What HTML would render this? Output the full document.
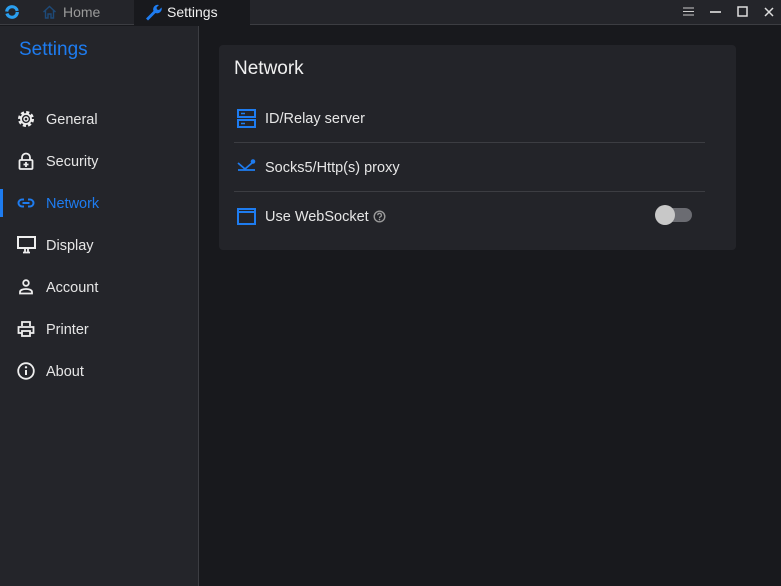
<!DOCTYPE html>
<html><head><meta charset="utf-8"><style>
*{margin:0;padding:0;box-sizing:border-box}
body{width:781px;height:586px;overflow:hidden;background:#18191d;font-family:"Liberation Sans",sans-serif;color:#e6e6e6;position:relative}
.tb{position:absolute;left:0;top:0;width:781px;height:25px;background:#24252a;border-bottom:1px solid #3c3d42}
.tab{position:absolute;top:0;height:25px;font-size:14px;line-height:25px}
.side{position:absolute;left:0;top:26px;width:199px;height:560px;background:#24252a;border-right:1px solid #3c3d42}
.side h1{position:absolute;left:19px;top:13px;font-size:19px;font-weight:normal;color:#1e7cf0}
.it{position:absolute;left:0;height:30px;width:199px;font-size:14.5px;line-height:32px}
.it span{position:absolute;left:46px}
.it svg{position:absolute;left:17px;top:6px}
.card{position:absolute;left:219px;top:45px;width:517px;height:205px;background:#232429;border-radius:4px}
.card h2{position:absolute;left:15px;top:13px;font-size:19px;font-weight:normal;color:#f0f0f0}
.row{position:absolute;left:15px;width:471px;height:48px;font-size:14.5px;line-height:50px}
.row span{position:absolute;left:31px}
.row svg{position:absolute;left:3px;top:15px}
.sep{position:absolute;left:15px;width:471px;height:1px;background:#3c3d42}
</style></head><body>
<div class="tb">
 <svg style="position:absolute;left:4px;top:4px" width="16" height="16" viewBox="0 0 16 16"><circle cx="8" cy="8" r="5.3" fill="none" stroke="#2a9ff0" stroke-width="3.2" stroke-dasharray="15 2"/></svg>
 <div class="tab" style="left:40px;width:94px;color:#9a9a9a">
  <svg style="position:absolute;left:2px;top:5px" width="15" height="14" viewBox="0 0 15 14"><path d="M1.5 7L7.5 1.5 13.5 7M3.5 5.5V13H6V9h3v4h2.5V5.5" fill="none" stroke="#1e4a78" stroke-width="1.4"/></svg>
  <span style="position:absolute;left:23px">Home</span></div>
 <div class="tab" style="left:134px;width:116px;background:#18191d;color:#f0f0f0">
  <svg style="position:absolute;left:10px;top:3px" width="18" height="18" viewBox="0 0 18 18"><path d="M2 15.5L9.5 8a4.5 4.5 0 0 1 5.5-6l-2.5 2.5.5 2 2 .5L17.5 4.5a4.5 4.5 0 0 1-6 5.5L4 17.5z" fill="#1e7cf0"/></svg>
  <span style="position:absolute;left:33px">Settings</span></div>
 <svg style="position:absolute;left:683px;top:7px" width="11" height="9"><path d="M0 1h11M0 4.5h11M0 8h11" stroke="#ccc" stroke-width="1"/></svg>
 <svg style="position:absolute;left:710px;top:11px" width="11" height="2"><path d="M0 1h11" stroke="#eee" stroke-width="1.5"/></svg>
 <svg style="position:absolute;left:737px;top:6px" width="11" height="11"><rect x="1" y="1" width="9" height="9" fill="none" stroke="#ddd" stroke-width="1.5"/></svg>
 <svg style="position:absolute;left:764px;top:7px" width="10" height="10"><path d="M1 1l8 8M9 1L1 9" stroke="#ddd" stroke-width="1.5"/></svg>
</div>
<div class="side">
 <h1>Settings</h1>
 <div class="it" style="top:78px"><svg width="18" height="18" viewBox="0 0 18 18"><circle cx="9" cy="9" r="6.5" fill="none" stroke="#eee" stroke-width="3" stroke-dasharray="3 2.1"/><circle cx="9" cy="9" r="5" fill="none" stroke="#eee" stroke-width="1.8"/><circle cx="9" cy="9" r="2" fill="none" stroke="#eee" stroke-width="1.4"/></svg><span>General</span></div>
 <div class="it" style="top:120px"><svg width="18" height="18" viewBox="0 0 18 18"><path d="M5 8V5.5a4 4 0 0 1 8 0V8" fill="none" stroke="#eee" stroke-width="1.8"/><rect x="2.5" y="8" width="13" height="9" rx="1" fill="none" stroke="#eee" stroke-width="1.8"/><path d="M9 10v5M6.5 12.5h5" stroke="#eee" stroke-width="1.8"/></svg><span>Security</span></div>
 <div class="it" style="top:162px;color:#1e7cf0"><div style="position:absolute;left:0;top:1px;width:3px;height:28px;background:#1e7cf0"></div><svg width="18" height="18" viewBox="0 0 18 18"><path d="M7 5.5H5a3.5 3.5 0 0 0 0 7h2M11 5.5h2a3.5 3.5 0 0 1 0 7h-2M5.5 9h7" fill="none" stroke="#1e7cf0" stroke-width="2"/></svg><span>Network</span></div>
 <div class="it" style="top:204px"><svg width="20" height="18" viewBox="0 0 20 18"><rect x="1" y="1" width="17" height="11" fill="none" stroke="#eee" stroke-width="2"/><path d="M8 13v3M11 13v3M6 16.5h7" stroke="#eee" stroke-width="1.8"/></svg><span>Display</span></div>
 <div class="it" style="top:246px"><svg width="18" height="18" viewBox="0 0 18 18"><circle cx="9" cy="5" r="2.8" fill="none" stroke="#eee" stroke-width="1.8"/><path d="M3 15.5v-1.5c0-2 3-3 6-3s6 1 6 3v1.5z" fill="none" stroke="#eee" stroke-width="1.8"/></svg><span>Account</span></div>
 <div class="it" style="top:288px"><svg width="18" height="18" viewBox="0 0 18 18"><path d="M5 6V2h8v4M5 13H1.5V7h15v6H13" fill="none" stroke="#eee" stroke-width="1.8"/><rect x="5" y="11" width="8" height="5" fill="none" stroke="#eee" stroke-width="1.8"/></svg><span>Printer</span></div>
 <div class="it" style="top:330px"><svg width="18" height="18" viewBox="0 0 18 18"><circle cx="9" cy="9" r="7.8" fill="none" stroke="#eee" stroke-width="1.8"/><path d="M9 8v5" stroke="#eee" stroke-width="2"/><circle cx="9" cy="5.3" r="1.2" fill="#eee"/></svg><span>About</span></div>
</div>
<div class="card">
 <h2>Network</h2>
 <div class="row" style="top:49px"><svg width="20" height="20" viewBox="0 0 20 20"><rect x="1" y="1" width="17" height="7" fill="none" stroke="#1e7cf0" stroke-width="2"/><rect x="1" y="11" width="17" height="7" fill="none" stroke="#1e7cf0" stroke-width="2"/><path d="M4 4.5h4M4 14.5h4" stroke="#1e7cf0" stroke-width="1.5"/></svg><span>ID/Relay server</span></div>
 <div class="sep" style="top:97px"></div>
 <div class="row" style="top:98px"><svg width="20" height="20" viewBox="0 0 20 20"><path d="M1 5l7 6 7-6M1 12h17" fill="none" stroke="#1e7cf0" stroke-width="1.8"/><circle cx="16" cy="3.5" r="2.3" fill="#1e7cf0"/></svg><span>Socks5/Http(s) proxy</span></div>
 <div class="sep" style="top:146px"></div>
 <div class="row" style="top:147px"><svg width="20" height="20" viewBox="0 0 20 20"><rect x="1" y="2" width="17" height="15" fill="none" stroke="#1e7cf0" stroke-width="2"/><path d="M1 5h17" stroke="#1e7cf0" stroke-width="2"/></svg><span>Use WebSocket</span>
  <svg style="left:139px;top:18px" width="13" height="13" viewBox="0 0 13 13"><circle cx="6.5" cy="6.5" r="5.3" fill="none" stroke="#999" stroke-width="1.4"/><path d="M4.8 5.2a1.8 1.8 0 1 1 2.4 1.6c-.6.3-.7.6-.7 1.3" fill="none" stroke="#999" stroke-width="1.3"/><circle cx="6.5" cy="9.6" r=".8" fill="#999"/></svg></div>
 <div style="position:absolute;left:437px;top:163px;width:36px;height:14px;border-radius:7px;background:#6b6c72"></div>
 <div style="position:absolute;left:436px;top:160px;width:20px;height:20px;border-radius:10px;background:#c8c8c8"></div>
</div>
</body></html>
